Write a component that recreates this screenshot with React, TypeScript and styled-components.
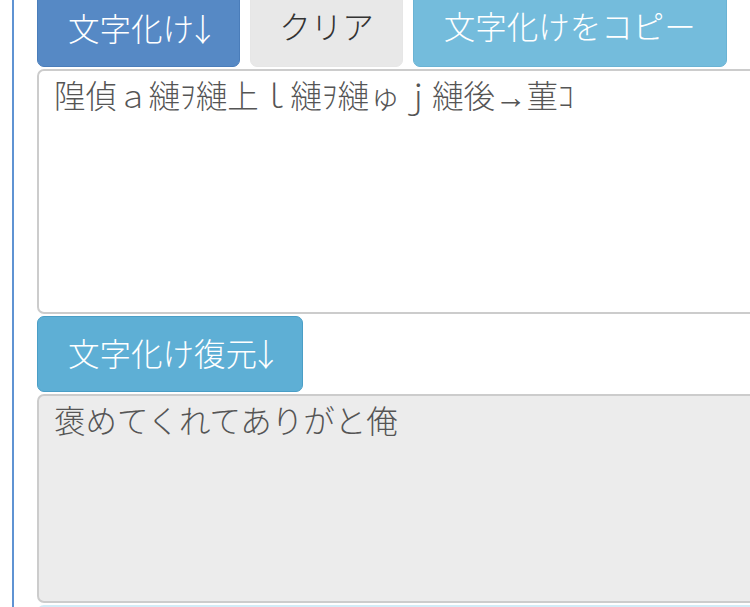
import React from "react";
import styled, { createGlobalStyle, css } from "styled-components";

const Global = createGlobalStyle`
  html, body { margin: 0; padding: 0; background: #fff; overflow: hidden; }
  body { font-family: "Liberation Sans", "Noto Sans CJK JP", sans-serif; }
`;

const Frame = styled.div`
  margin-left: 12px;
  border-left: 2px solid #5f93d3;
  padding-left: 23px;
  height: 607px;
  overflow: hidden;
`;

const Panel = styled.div`
  margin-top: -9px;
  width: 780px;
  display: flex;
  flex-direction: column;
  gap: 2px;
`;

const Row = styled.div`
  display: flex;
  gap: 10px;
`;

type Variant = "primary" | "default" | "info" | "infoStrong";

const variants: Record<Variant, ReturnType<typeof css>> = {
  primary: css`
    background: #5689c5;
    border-color: #4a7dba;
    color: #fff;
  `,
  default: css`
    background: #e8e8e8;
    border-color: #e6e6e6;
    color: #333;
    padding: 0 28px;
  `,
  info: css`
    background: #74bcdc;
    border-color: #6ab3d4;
    color: #fff;
  `,
  infoStrong: css`
    background: #5eafd5;
    border-color: #4a9ec6;
    color: #fff;
  `,
};

const Button = styled.button<{ $v: Variant }>`
  box-sizing: border-box;
  height: 76px;
  padding: 0 30px;
  border: 1px solid;
  border-radius: 7px;
  font-family: "Liberation Sans", "Noto Sans CJK JP", sans-serif;
  font-weight: 300;
  font-size: 31.5px;
  line-height: 1;
  flex: 0 0 auto;
  align-self: flex-start;
  ${(p) => variants[p.$v]}
`;

const Arrow = styled.span`
  font-family: "Noto Sans CJK JP", sans-serif;
  font-weight: 300;
  display: inline-block;
  margin: 0 -0.3em 0 -0.22em;
`;

const Area = styled.textarea<{ $grey?: boolean; $h: number }>`
  box-sizing: border-box;
  display: block;
  width: 780px;
  height: ${(p) => p.$h}px;
  border: 2px solid #cccccc;
  border-radius: 7px;
  padding: 5px 15px;
  margin: 0;
  resize: none;
  outline: none;
  font-family: "Liberation Sans", "Noto Sans CJK JP", sans-serif;
  font-weight: 300;
  font-size: 31.5px;
  line-height: 1.38;
  color: #555;
  background: ${(p) => (p.$grey ? "#ececec" : "#fff")};
`;

const NextButton = styled.div`
  height: 20px;
  width: 780px;
  background: #d3ecf7;
  border-radius: 7px 7px 0 0;
`;

export default function App() {
  const garbled = "隍偵ａ縺ｦ縺上ｌ縺ｦ縺ゅｊ縺後→菫ｺ";
  const original = "褒めてくれてありがと俺";
  return (
    <>
      <Global />
      <Frame>
        <Panel>
          <Row>
            <Button $v="primary">
              文字化け<Arrow>↓</Arrow>
            </Button>
            <Button $v="default">クリア</Button>
            <Button $v="info">文字化けをコピー</Button>
          </Row>
          <Area $h={245} readOnly value={garbled} />
          <Row>
            <Button $v="infoStrong">
              文字化け復元<Arrow>↓</Arrow>
            </Button>
          </Row>
          <Area $h={209} $grey readOnly value={original} />
          <NextButton />
        </Panel>
      </Frame>
    </>
  );
}
